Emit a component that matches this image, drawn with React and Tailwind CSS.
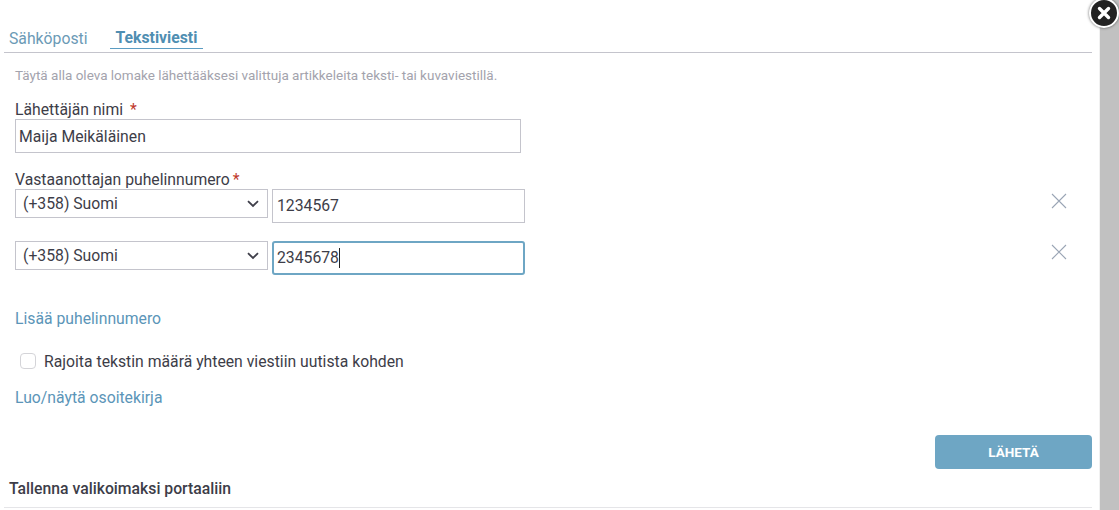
import React from "react";

const Chevron = () => (
  <svg width="12" height="8" viewBox="0 0 12 8" fill="none" stroke="#3f3f4a" strokeWidth="1.8" className="mr-[3px]">
    <path d="M1 1.2 L6 6 L11 1.2" />
  </svg>
);

const Cross = () => (
  <svg width="16" height="16" viewBox="0 0 16 16" fill="none" stroke="#9aa5b5" strokeWidth="1.1">
    <path d="M1 1 L15 15 M15 1 L1 15" />
  </svg>
);

const Phone = ({ value, focused, crossTop, selectPad }) => (
  <div className="flex items-start">
    <div className={`w-[253px] h-[29px] border border-[#c4c4cc] flex items-center justify-between pl-[7px] pr-[5px] text-[15.75px] text-[#3d3d48] ${selectPad}`}>
      <span>(+358) Suomi</span>
      <Chevron />
    </div>
    {focused ? (
      <div className="ml-[4px] w-[253px] h-[34px] border-2 border-[#6ea6c4] rounded-[3px] flex items-center pl-[3px] text-[15.75px] text-[#3d3d48]">
        <span className="w-[63px] whitespace-nowrap border-r border-[#222] leading-[20px]">{value}</span>
      </div>
    ) : (
      <div className="ml-[4px] w-[253px] h-[34px] border border-[#c4c4cc] flex items-center pl-[4px] text-[15.75px] text-[#3d3d48]">
        {value}
      </div>
    )}
    <div className={`ml-[526px] ${crossTop}`}>
      <Cross />
    </div>
  </div>
);

export default function App() {
  return (
    <div className="relative w-[1119px] h-[510px] overflow-hidden bg-white flex font-['Roboto',sans-serif]">
      <main className="w-[1099px] h-full flex flex-col pl-[4px] pr-[7px]">
        <div className="h-[53px] border-b border-[#c4c4cc] flex items-end pb-[3px] pl-[5px] shrink-0">
          <span className="text-[15.75px] leading-[20px] text-[#6b9ab6]">Sähköposti</span>
          <span className="ml-[22px] px-[6px] text-[15.75px] leading-[20px] font-bold text-[#4f8eb2] border-b border-[#5b9cc2]">
            Tekstiviesti
          </span>
        </div>
        <div className="pl-[11px] flex flex-col flex-1">
          <p className="mt-[14px] text-[13.5px] leading-[16px] text-[#a3a3ad]">
            Täytä alla oleva lomake lähettääksesi valittuja artikkeleita teksti- tai kuvaviestillä.
          </p>
          <label className="mt-[17px] text-[15.75px] leading-[20px] text-[#3d3d48]">
            Lähettäjän nimi <span className="ml-[3px] text-[#c0392b]">*</span>
          </label>
          <div className="-mt-[1px] w-[506px] h-[34px] border border-[#c4c4cc] flex items-center pl-[3px] pt-[2px] text-[15.75px] text-[#3d3d48]">
            Maija Meikäläinen
          </div>
          <label className="mt-[17px] text-[15.75px] leading-[20px] text-[#3d3d48]">
            Vastaanottajan puhelinnumero<span className="ml-[3px] text-[#c0392b]">*</span>
          </label>
          <div className="-mt-[1px]">
            <Phone value="1234567" crossTop="mt-[4px]" selectPad="pt-[1px]" />
          </div>
          <div className="mt-[18px]">
            <Phone value="2345678" focused crossTop="mt-[3px]" selectPad="" />
          </div>
          <a className="mt-[34px] text-[15.75px] leading-[20px] text-[#5b95b8]">Lisää puhelinnumero</a>
          <div className="mt-[23px] flex items-center h-[20px] pl-[5px]">
            <span className="w-[16px] h-[16px] -mt-[2px] rounded-[4px] border border-[#d4d4d8] bg-white" />
            <span className="ml-[8px] text-[15.75px] leading-[20px] text-[#3d3d48]">
              Rajoita tekstin määrä yhteen viestiin uutista kohden
            </span>
          </div>
          <a className="mt-[16px] text-[15.75px] leading-[20px] text-[#5b95b8]">Luo/näytä osoitekirja</a>
          <div className="mt-[27px] flex justify-end">
            <button className="w-[157px] h-[34px] rounded-[4px] bg-[#6ea6c4] text-white text-[13.5px] font-bold">
              LÄHETÄ
            </button>
          </div>
        </div>
        <div className="h-[39px] border-b border-[#e5e5e8] pl-[5px] pt-[2px] flex items-center text-[15.75px] font-medium text-[#3d3d48] shrink-0">
          Tallenna valikoimaksi portaaliin
        </div>
        <div className="h-[2px] shrink-0" />
      </main>
      <div className="w-[20px] h-full bg-[#f1f1f1] pl-[1px] shrink-0 flex">
        <div className="w-full bg-[#c1c1c1]" />
      </div>
      <div className="absolute left-[1089px] top-[-2px] w-[30px] h-[30px] rounded-full bg-[#222] border-2 border-white shadow-[0_0_3px_rgba(0,0,0,0.6)] flex items-center justify-center">
        <svg width="14" height="14" viewBox="0 0 14 14" stroke="white" strokeWidth="3.4" strokeLinecap="round">
          <path d="M2.5 2.5 L11.5 11.5 M11.5 2.5 L2.5 11.5" />
        </svg>
      </div>
    </div>
  );
}
